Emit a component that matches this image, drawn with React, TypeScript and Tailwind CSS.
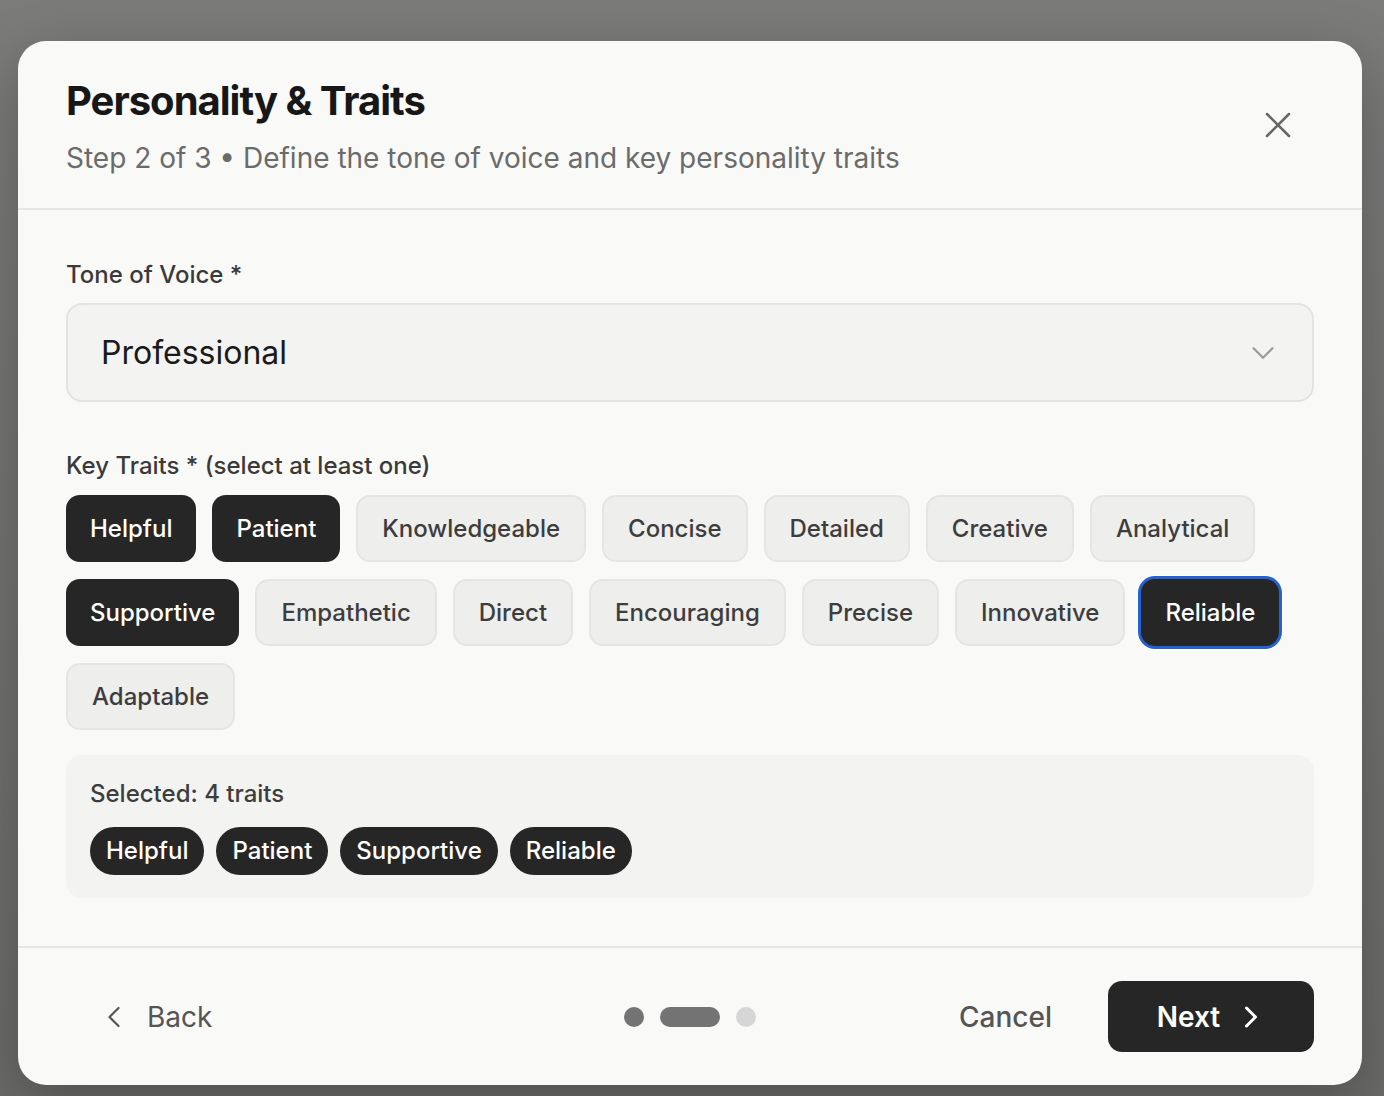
import React, { useState } from 'react';
import { X, ChevronDown, ChevronLeft, ChevronRight } from 'lucide-react';

const TRAITS = [
  'Helpful',
  'Patient',
  'Knowledgeable',
  'Concise',
  'Detailed',
  'Creative',
  'Analytical',
  'Supportive',
  'Empathetic',
  'Direct',
  'Encouraging',
  'Precise',
  'Innovative',
  'Reliable',
  'Adaptable',
];

const font = { fontFamily: 'Inter, "Noto Sans", sans-serif' };

export default function App() {
  const [selected, setSelected] = useState<string[]>(['Helpful', 'Patient', 'Supportive', 'Reliable']);
  const focused = 'Reliable';

  const toggle = (trait: string) => {
    setSelected(prev => (prev.includes(trait) ? prev.filter(t => t !== trait) : [...prev, trait]));
  };

  return (
    <div
      className="min-h-[1096px] w-full bg-gradient-to-b from-[#7b7b7a] to-[#6a6a69] pl-[18px] pt-[41px] pb-[11px]"
      style={font}
    >
      <div className="flex h-[1044px] w-[1344px] flex-col rounded-[28px] bg-[#f9f9f8] shadow-[0_20px_60px_rgba(0,0,0,0.25)]">
        <header className="flex h-[169px] shrink-0 items-center justify-between border-b-2 border-[#e6e6e5] px-12">
          <div className="flex flex-col gap-[20px] pt-[7px]">
            <h1 className="text-[40px] font-bold leading-[40px] tracking-[-1px] text-[#171717]">
              Personality &amp; Traits
            </h1>
            <p className="text-[28px] leading-[34px] text-[#6b6b6b]">
              Step 2 of 3 • Define the tone of voice and key personality traits
            </p>
          </div>
          <button className="mr-[14px] text-[#666]" aria-label="Close">
            <X size={44} strokeWidth={2.5} absoluteStrokeWidth />
          </button>
        </header>

        <main className="flex flex-1 flex-col px-12 pt-[51px]">
          <label className="text-[24px] font-medium leading-[28px] text-[#3a3a3a]">Tone of Voice *</label>
          <button className="mt-[14px] flex h-[99px] w-full items-center justify-between rounded-[16px] border-2 border-[#e3e3e2] bg-[#f3f3f2] pl-[33px] pr-[30px]">
            <span className="text-[32px] leading-none text-[#1a1a1a]">Professional</span>
            <ChevronDown size={38} strokeWidth={2.2} absoluteStrokeWidth className="text-[#9a9a9a]" />
          </button>

          <div className="mt-[50px] text-[24px] font-medium leading-[28px] text-[#3a3a3a]">
            Key Traits * (select at least one)
          </div>
          <div className="mt-[15px] flex flex-wrap gap-x-[16px] gap-y-[17px]">
            {TRAITS.map(trait => {
              const on = selected.includes(trait);
              const isFocused = trait === focused;
              return (
                <button
                  key={trait}
                  onClick={() => toggle(trait)}
                  className={
                    on
                      ? isFocused
                        ? 'h-[67px] rounded-[14px] bg-[#262626] px-[24px] text-[24px] font-medium text-white shadow-[0_0_0_3px_#2461d4,0_0_0_4px_#ffffff]'
                        : 'h-[67px] rounded-[14px] bg-[#262626] px-[24px] text-[24px] font-medium text-white'
                      : 'h-[67px] rounded-[14px] border-2 border-[#e5e5e4] bg-[#eeeeed] px-[24px] text-[24px] font-medium text-[#3d3d3d]'
                  }
                >
                  {trait}
                </button>
              );
            })}
          </div>

          <div className="mt-[25px] rounded-[16px] bg-[#f3f3f2] px-6 pt-[25px] pb-[23px]">
            <div className="text-[24px] font-medium leading-[28px] text-[#3d3d3d]">
              Selected: {selected.length} traits
            </div>
            <div className="mt-[19px] flex flex-wrap gap-3">
              {selected.map(trait => (
                <span
                  key={trait}
                  className="flex h-[48px] items-center rounded-full bg-[#262626] px-4 text-[24px] font-medium text-white"
                >
                  {trait}
                </span>
              ))}
            </div>
          </div>
        </main>

        <footer className="flex h-[139px] shrink-0 items-center border-t-2 border-[#e6e6e5] px-12">
          <div className="flex flex-1">
            <button className="flex items-center gap-[15px] pl-[30px] text-[28px] text-[#555]">
              <ChevronLeft size={36} strokeWidth={2.2} absoluteStrokeWidth />
              <span>Back</span>
            </button>
          </div>
          <div className="flex items-center gap-4">
            <span className="h-5 w-5 rounded-full bg-[#737373]" />
            <span className="h-5 w-[60px] rounded-full bg-[#737373]" />
            <span className="h-5 w-5 rounded-full bg-[#d6d6d6]" />
          </div>
          <div className="flex flex-1 items-center justify-end gap-[56px]">
            <button className="text-[28px] font-medium text-[#555]">Cancel</button>
            <button className="flex h-[71px] w-[206px] items-center justify-center gap-[13px] rounded-[14px] bg-[#262626] pl-[4px] text-[28px] font-semibold text-white">
              <span>Next</span>
              <ChevronRight size={36} strokeWidth={3} absoluteStrokeWidth />
            </button>
          </div>
        </footer>
      </div>
    </div>
  );
}
